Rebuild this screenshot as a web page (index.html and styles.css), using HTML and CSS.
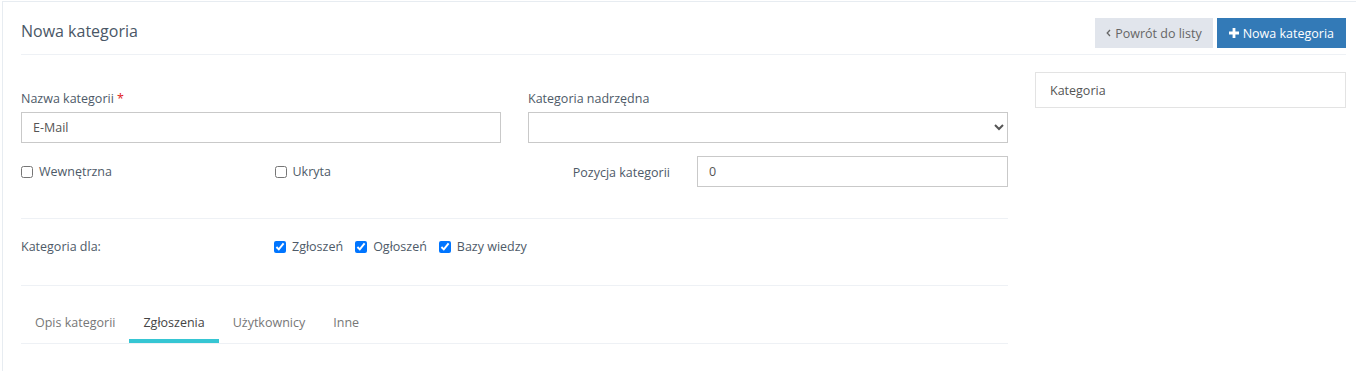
FILE: index.html
```html
<!DOCTYPE html>
<html>
<head>
    <title>Nowa kategoria</title>
    <link rel="stylesheet" href="styles.css">
</head>
<body>
    <div class="portlet">
        <div class="portlet-title">
            <div class="caption">Nowa kategoria</div>
            <div class="actions">
                <button type="button" class="btn btn-default">
                    <svg class="icon-angle" width="5" height="8" viewBox="0 0 5 8"><path d="M4 1 L1.2 4 L4 7" fill="none" stroke="#666" stroke-width="1.3"/></svg>
                    Powrót do listy
                </button>
                <button type="button" class="btn btn-primary">
                    <svg class="icon-plus" width="10" height="10" viewBox="0 0 10 10"><path d="M3.6 0h2.8v3.6H10v2.8H6.4V10H3.6V6.4H0V3.6h3.6z" fill="#fff"/></svg>
                    Nowa kategoria
                </button>
            </div>
        </div>

        <div class="portlet-body">
            <form class="category-form">
                <div class="form-row">
                    <div class="form-group">
                        <label class="control-label" for="name">Nazwa kategorii <span class="required">*</span></label>
                        <input type="text" id="name" class="form-control" value="E-Mail">
                    </div>
                    <div class="form-group">
                        <label class="control-label" for="parent">Kategoria nadrzędna</label>
                        <select id="parent" class="form-control">
                            <option></option>
                        </select>
                    </div>
                </div>

                <div class="form-row form-row-second">
                    <div class="check-pair">
                        <label class="check"><input type="checkbox"> Wewnętrzna</label>
                        <label class="check"><input type="checkbox"> Ukryta</label>
                    </div>
                    <div class="inline-group">
                        <label class="inline-label" for="position">Pozycja kategorii</label>
                        <input type="text" id="position" class="form-control" value="0">
                    </div>
                </div>

                <hr class="divider">

                <div class="for-row">
                    <span class="for-label">Kategoria dla:</span>
                    <div class="check-list">
                        <label class="check"><input type="checkbox" checked> Zgłoszeń</label>
                        <label class="check"><input type="checkbox" checked> Ogłoszeń</label>
                        <label class="check"><input type="checkbox" checked> Bazy wiedzy</label>
                    </div>
                </div>

                <hr class="divider">

                <ul class="tabs">
                    <li class="tab">Opis kategorii</li>
                    <li class="tab active">Zgłoszenia</li>
                    <li class="tab">Użytkownicy</li>
                    <li class="tab">Inne</li>
                </ul>
            </form>

            <div class="side-list">
                <div class="side-item">Kategoria</div>
            </div>
        </div>
    </div>
</body>
</html>
```

FILE: styles.css
```css
body {
    margin: 0;
    font-family: "Open Sans", "Liberation Sans", sans-serif;
    font-size: 12.5px;
    color: #555;
    background-color: #fff;
}

.portlet {
    margin: 1px 0 0 2px;
    min-height: 369px;
    padding: 0 10px 0 18px;
    border-left: 1px solid #e7ecf1;
    border-top: 1px solid #e7ecf1;
}

.portlet-title {
    display: flex;
    justify-content: space-between;
    align-items: flex-start;
    padding: 16px 0 6px;
    border-bottom: 1px solid #eef1f5;
}

.caption {
    padding-top: 2px;
    font-size: 16px;
    line-height: 22px;
    color: #4a5766;
}

.actions {
    display: flex;
    gap: 4px;
}

.btn {
    display: flex;
    align-items: center;
    gap: 4px;
    height: 30px;
    padding: 0 11px;
    border: none;
    border-radius: 0;
    font-family: inherit;
    font-size: 12.5px;
    cursor: pointer;
}

.btn-default {
    background-color: #e1e5ec;
    color: #666;
}

.btn-primary {
    padding: 0 12px;
    background-color: #337ab7;
    color: #fff;
}

.portlet-body {
    display: grid;
    grid-template-columns: 987px 1fr;
    gap: 27px;
}

.category-form {
    padding-top: 35px;
}

.form-row {
    display: grid;
    grid-template-columns: 1fr 1fr;
    gap: 27px;
}

.form-row-second {
    margin-top: 13px;
    align-items: center;
}

.control-label {
    display: block;
    margin-bottom: 4px;
    line-height: 18px;
    color: #4e5a68;
}

.required {
    color: #e02222;
}

.form-control {
    display: block;
    width: 100%;
    height: 31px;
    box-sizing: border-box;
    padding: 4px 11px;
    border: 1px solid #c9c9c9;
    border-radius: 0;
    background-color: #fff;
    font-family: inherit;
    font-size: 12.5px;
    color: #555;
}

select.form-control {
    padding: 4px 8px;
}

.check-pair {
    display: grid;
    grid-template-columns: 1fr 1fr;
    gap: 27px;
    padding-top: 1px;
}

.check {
    display: inline-flex;
    align-items: center;
    gap: 6px;
    line-height: 18px;
    color: #4e5a68;
}

.check input {
    width: 12px;
    height: 12px;
    margin: 0;
}

.inline-group {
    display: flex;
    align-items: center;
    gap: 27px;
}

.inline-label {
    flex: 0 0 142px;
    padding-top: 1px;
    text-align: right;
    color: #4e5a68;
}

.inline-group .form-control {
    flex: 1;
}

.divider {
    margin: 31px 0 0;
    border: none;
    border-top: 1px solid #eef1f5;
}

.for-row {
    display: grid;
    grid-template-columns: 253px 1fr;
    padding: 19px 0 29px;
    line-height: 18px;
}

.for-label {
    color: #4e5a68;
}

.check-list {
    display: flex;
    gap: 12px;
}

.for-row + .divider {
    margin-top: 0;
}

.tabs {
    display: flex;
    margin: 17px 0 0;
    padding: 0;
    list-style: none;
    border-bottom: 1px solid #eef1f5;
}

.tab {
    padding: 11px 14px 7px;
    line-height: 18px;
    border-bottom: 4px solid transparent;
    color: #777;
}

.tab.active {
    border-bottom-color: #36c6d3;
    color: #444;
}

.side-list {
    margin-top: 17px;
    align-self: start;
}

.side-item {
    padding: 9px 14px 7px;
    line-height: 18px;
    border: 1px solid #e3e3e3;
    color: #555;
}
```
